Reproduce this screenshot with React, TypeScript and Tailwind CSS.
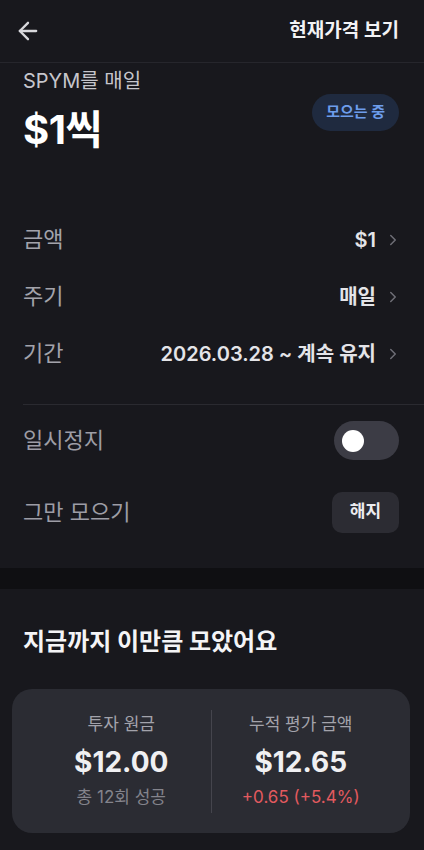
import { ArrowLeft, ChevronRight } from 'lucide-react';

const font = { fontFamily: 'Inter, "Noto Sans CJK KR", "Noto Sans", sans-serif' };

function Row({ label, value }: { label: string; value: string }) {
  return (
    <div className="flex items-center justify-between h-[57px]">
      <span className="text-[22px] text-[#a3a3ab]">{label}</span>
      <div className="flex items-center gap-[8px]">
        <span className="text-[20px] font-semibold text-[#e4e4e8]">{value}</span>
        <ChevronRight size={18} strokeWidth={2} className="text-[#6e6e76] -mr-[3px]" />
      </div>
    </div>
  );
}

export default function App() {
  return (
    <main style={font} className="w-[424px] h-[850px] overflow-hidden bg-[#18181d] text-white">
      <header className="flex items-center justify-between h-[63px] px-[14px] border-b border-[#26262c]">
        <ArrowLeft size={28} strokeWidth={2} className="text-[#d8d8dc]" />
        <span className="text-[19px] font-semibold text-[#f2f2f4] pr-[11px]">현재가격 보기</span>
      </header>

      <section className="px-[23px] pr-[25px] pt-[6px]">
        <div className="flex items-start justify-between">
          <div>
            <p className="text-[20px] text-[#c6c6cc] leading-[24px]">SPYM를 매일</p>
            <p className="text-[40px] font-bold leading-[46px] mt-[14px] tracking-[-0.5px]">$1씩</p>
          </div>
          <span className="mt-[25px] rounded-full bg-[#1f2a3f] text-[#6d9deb] text-[15px] font-bold px-[14px] h-[37px] flex items-center">
            모으는 중
          </span>
        </div>

        <div className="mt-[58px]">
          <Row label="금액" value="$1" />
          <Row label="주기" value="매일" />
          <Row label="기간" value="2026.03.28 ~ 계속 유지" />
        </div>
      </section>

      <div className="ml-[23px] mt-[22px] border-t border-[#2a2a30]" />

      <section className="px-[23px] pr-[25px]">
        <div className="flex items-center justify-between h-[71px]">
          <span className="text-[22px] text-[#9d9da5]">일시정지</span>
          <div className="w-[65px] h-[39px] rounded-full bg-[#3c3c45] flex items-center pl-[8px]">
            <div className="w-[22px] h-[22px] rounded-full bg-white" />
          </div>
        </div>
        <div className="flex items-center justify-between h-[72px]">
          <span className="text-[22px] text-[#9d9da5]">그만 모으기</span>
          <button className="w-[67px] h-[41px] rounded-[10px] bg-[#2c2c33] text-[17px] font-semibold text-[#ececef]">
            해지
          </button>
        </div>
      </section>

      <div className="mt-[20px] h-[21px] bg-[#0f0f12]" />

      <section className="px-[12px]">
        <h2 className="px-[11px] mt-[37px] text-[24px] leading-[32px] font-bold text-[#f4f4f6]">지금까지 이만큼 모았어요</h2>
        <div className="mt-[31px] w-[398px] h-[144px] rounded-[20px] bg-[#2b2c33] flex items-center px-[20px]">
          <div className="flex-1 flex flex-col items-center">
            <span className="text-[17px] leading-[24px] text-[#a3a3ab]">투자 원금</span>
            <span className="text-[28px] font-bold text-[#f0f0f2] leading-[38px] mt-[7px]">$12.00</span>
            <span className="text-[17px] leading-[26px] text-[#84848c] mt-[3px]">총 12회 성공</span>
          </div>
          <div className="w-px h-[103px] bg-[#45454d]" />
          <div className="flex-1 flex flex-col items-center">
            <span className="text-[17px] leading-[24px] text-[#a3a3ab]">누적 평가 금액</span>
            <span className="text-[28px] font-bold text-[#f0f0f2] leading-[38px] mt-[7px]">$12.65</span>
            <span className="text-[17px] leading-[26px] text-[#e35a5f] mt-[3px]">+0.65 (+5.4%)</span>
          </div>
        </div>
      </section>
    </main>
  );
}
